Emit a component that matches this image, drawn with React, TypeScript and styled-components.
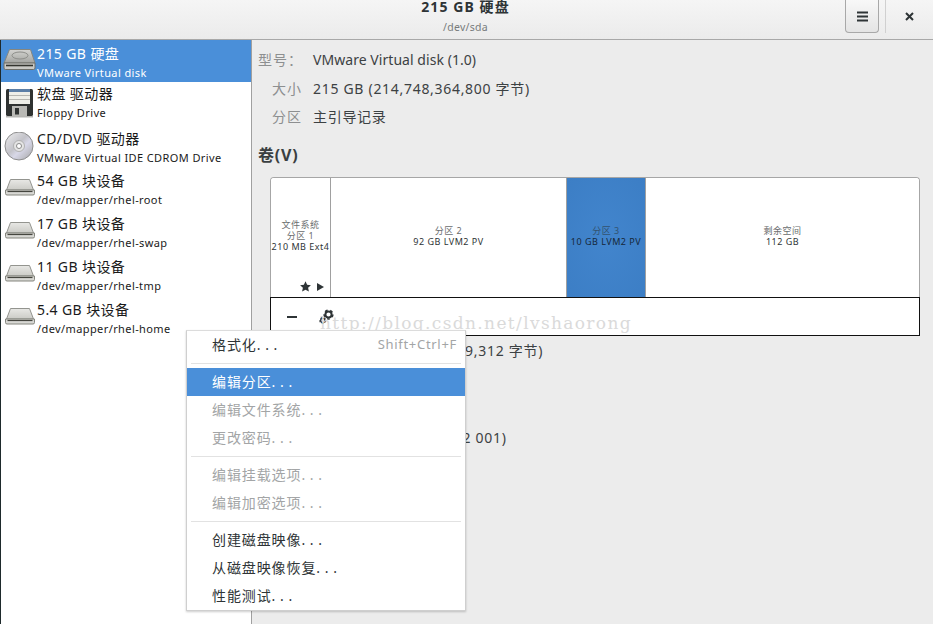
import { styled, createGlobalStyle } from 'styled-components';

const GlobalStyle = createGlobalStyle`
  html, body {
    margin: 0;
    padding: 0;
    background: #ececec;
  }
  * {
    box-sizing: border-box;
  }
`;

const Window = styled.div`
  position: relative;
  width: 933px;
  height: 624px;
  overflow: hidden;
  display: flex;
  flex-direction: column;
  background: #ececec;
  color: #2e3436;
  font-family: 'Noto Sans', 'Noto Sans CJK SC', sans-serif;
  font-size: 13px;
`;

const Header = styled.header`
  height: 40px;
  flex: none;
  display: flex;
  align-items: flex-start;
  justify-content: flex-end;
  border-bottom: 1px solid #a8a8a8;
  background: linear-gradient(#f5f5f5, #ebebeb);
`;

const TitleBlock = styled.div`
  position: absolute;
  left: 0;
  top: -3px;
  width: 931px;
  text-align: center;
`;

const Title = styled.div`
  font-size: 14px;
  font-weight: 700;
  line-height: 20px;
  letter-spacing: 1.1px;
  color: #2e3436;
`;

const Subtitle = styled.div`
  margin-top: 1px;
  font-size: 10.5px;
  line-height: 18px;
  letter-spacing: 0.3px;
  color: #777b7c;
`;

const MenuButton = styled.button`
  width: 34px;
  height: 33px;
  margin-right: 6px;
  padding: 0;
  display: flex;
  align-items: center;
  justify-content: center;
  border: 1px solid #a8a8a8;
  border-top: none;
  border-radius: 0 0 4px 4px;
  background: linear-gradient(#f8f8f8, #e4e4e4);
`;

const HeaderSeparator = styled.div`
  width: 1px;
  height: 33px;
  background: #d0d0d0;
`;

const CloseButton = styled.div`
  width: 47px;
  height: 33px;
  display: flex;
  align-items: center;
  justify-content: center;
`;

const Body = styled.div`
  flex: 1;
  display: flex;
  min-height: 0;
`;

const Sidebar = styled.aside`
  width: 252px;
  flex: none;
  background: #fff;
  border-left: 1px solid #1e2a2c;
  border-right: 1px solid #a0a0a0;
`;

const DriveRow = styled.div<{ $selected?: boolean; $height: number }>`
  height: ${(p) => p.$height}px;
  display: flex;
  align-items: flex-start;
  background: ${(p) => (p.$selected ? '#4a8fd9' : 'transparent')};
  color: ${(p) => (p.$selected ? '#fff' : '#1a1a1a')};
`;

const DriveIcon = styled.div`
  width: 36px;
  height: 41px;
  flex: none;
  display: flex;
  align-items: center;
  justify-content: center;
`;

const DriveText = styled.div<{ $top: number }>`
  padding-top: ${(p) => p.$top}px;
  min-width: 0;
  white-space: nowrap;
`;

const DriveTitle = styled.div`
  font-size: 14px;
  line-height: 20px;
  letter-spacing: 0.4px;
`;

const DriveSub = styled.div`
  font-size: 11px;
  line-height: 18px;
  letter-spacing: 0.4px;
`;

const Content = styled.main`
  flex: 1;
  padding: 5px 14px 0 6px;
`;

const InfoGrid = styled.dl<{ $row: number }>`
  margin: 0;
  display: grid;
  grid-template-columns: 44px 1fr;
  column-gap: 11px;
  grid-auto-rows: ${(p) => p.$row}px;
  align-items: center;
`;

const InfoLabel = styled.dt`
  font-size: 14px;
  color: #8d8f90;
  text-align: right;
  white-space: nowrap;
  letter-spacing: 1px;
`;

const InfoValue = styled.dd<{ $tracking?: number }>`
  margin: 0;
  font-size: 14px;
  color: #3c4143;
  white-space: nowrap;
  letter-spacing: ${(p) => p.$tracking ?? 0.7}px;
`;

const SectionTitle = styled.h2`
  margin: 14.5px 0 12px;
  font-size: 16px;
  line-height: 20px;
  font-weight: 700;
  color: #3a3f41;
  letter-spacing: 0.8px;
`;

const VolumeBox = styled.div`
  margin-left: 12px;
  width: 650px;
`;

const PartitionBar = styled.div`
  height: 120px;
  display: flex;
  border: 1px solid #a6a6a6;
  border-bottom: none;
  border-radius: 4px 4px 0 0;
  overflow: hidden;
  background: #fff;
`;

const Partition = styled.div<{ $width?: number; $selected?: boolean; $last?: boolean }>`
  position: relative;
  width: ${(p) => (p.$width ? `${p.$width}px` : 'auto')};
  flex: ${(p) => (p.$width ? 'none' : '1')};
  display: flex;
  flex-direction: column;
  align-items: center;
  justify-content: center;
  padding-bottom: 4px;
  border-right: ${(p) => (p.$last ? 'none' : '1px solid #a0a0a0')};
  background: ${(p) =>
    p.$selected ? 'radial-gradient(ellipse at center, #4285cd, #3c7ec5)' : '#fff'};
  font-size: 9px;
  line-height: 11px;
  letter-spacing: 0.5px;
  white-space: nowrap;
`;

const PartitionName = styled.div<{ $selected?: boolean }>`
  color: ${(p) => (p.$selected ? '#33526f' : '#6a6d6e')};
`;

const PartitionSize = styled.div<{ $selected?: boolean }>`
  color: ${(p) => (p.$selected ? '#16283a' : '#2e3436')};
`;

const PartitionMarks = styled.div`
  position: absolute;
  right: 6px;
  bottom: 5px;
  display: flex;
  align-items: center;
  gap: 6px;
`;

const VolumeToolbar = styled.div`
  height: 39px;
  display: flex;
  align-items: center;
  gap: 19px;
  padding-left: 13px;
  background: #fff;
  border: 1px solid #111;
`;

const ToolIcon = styled.div`
  width: 16px;
  height: 16px;
  display: flex;
  align-items: center;
  justify-content: center;
`;

const PartitionInfo = styled.div`
  margin-top: -1px;
`;

const Watermark = styled.div`
  position: absolute;
  left: 320px;
  top: 312px;
  font-family: 'DejaVu Serif', 'Liberation Serif', serif;
  font-size: 17px;
  line-height: 22px;
  letter-spacing: 1.36px;
  color: #dadada;
  white-space: nowrap;
  pointer-events: none;
`;

const Popup = styled.div`
  position: absolute;
  left: 186px;
  top: 330px;
  width: 280px;
  height: 281px;
  background: #fff;
  border: 1px solid #cfcfcf;
  border-top-color: #dcdcdc;
  box-shadow: 0 1px 2px rgba(0, 0, 0, 0.2);
`;

const PopupItem = styled.div<{ $active?: boolean; $disabled?: boolean }>`
  height: 28px;
  display: flex;
  align-items: center;
  padding: 0 8px 2px 25px;
  font-size: 14px;
  letter-spacing: 0.9px;
  white-space: nowrap;
  background: ${(p) => (p.$active ? '#4a8fd9' : 'transparent')};
  color: ${(p) => (p.$active ? '#fff' : p.$disabled ? '#a3a5a6' : '#2e3436')};
`;

const Dots = styled.span`
  letter-spacing: 4.7px;
`;

const Shortcut = styled.span`
  margin-left: auto;
  font-size: 13px;
  letter-spacing: 0.7px;
  color: #a3a5a6;
`;

const PopupSeparator = styled.div`
  height: 1px;
  margin: 4px 4px;
  background: #e2e2e2;
`;

const SelectedDisk = () => (
  <svg width="33" height="26" viewBox="0 0 33 26">
    <defs>
      <linearGradient id="diskTop" x1="0" y1="0" x2="0" y2="1">
        <stop offset="0" stopColor="#d4d4d1" />
        <stop offset="1" stopColor="#a3a4a0" />
      </linearGradient>
    </defs>
    <path d="M6.5 1.5h21l4.5 13.5H1z" fill="url(#diskTop)" stroke="#85867f" />
    <ellipse cx="17" cy="7.5" rx="8" ry="3.5" fill="none" stroke="#8d8e8a" />
    <path d="M1 15h31v5a1.5 1.5 0 0 1-1.5 1.5h-28A1.5 1.5 0 0 1 1 20z" fill="#c9c9c5" stroke="#6e6f69" />
    <path d="M3 17.5h27" stroke="#33342e" strokeWidth="1.6" />
  </svg>
);

const PlainDisk = () => (
  <svg width="33" height="26" viewBox="0 0 33 26">
    <defs>
      <linearGradient id="plainTop" x1="0" y1="0" x2="0" y2="1">
        <stop offset="0" stopColor="#e8e8e5" />
        <stop offset="1" stopColor="#cbcbc6" />
      </linearGradient>
    </defs>
    <path d="M7.5 2.5h19l4 10.5h-27z" fill="url(#plainTop)" stroke="#93948f" />
    <path d="M2.5 13h29v3.5a1.5 1.5 0 0 1-1.5 1.5H4a1.5 1.5 0 0 1-1.5-1.5z" fill="#d8d8d4" stroke="#85867f" />
    <path d="M4.5 14.5h25" stroke="#45463f" strokeWidth="1.2" />
  </svg>
);

const FloppyDisk = () => (
  <svg width="29" height="30" viewBox="0 0 29 30">
    <rect x="1" y="1" width="27" height="27" rx="1.5" fill="#2f3231" />
    <rect x="4" y="1" width="21" height="15" fill="#eeeee8" />
    <rect x="4" y="1" width="21" height="3" fill="#5b7ea6" />
    <path d="M4 7.5h21M4 11.5h21" stroke="#b5b5b0" />
    <rect x="7" y="18" width="15" height="10" fill="#b9b9b5" />
    <rect x="10" y="20" width="4" height="6.5" fill="#2f3231" />
    <rect x="1" y="28" width="27" height="1.5" fill="#b5b5b2" />
  </svg>
);

const OpticalDisc = () => (
  <svg width="30" height="30" viewBox="0 0 30 30">
    <defs>
      <linearGradient id="discFace" x1="0" y1="0" x2="1" y2="1">
        <stop offset="0" stopColor="#efefef" />
        <stop offset="0.45" stopColor="#c3c3c9" />
        <stop offset="0.6" stopColor="#d8d8e8" />
        <stop offset="1" stopColor="#a5a5a5" />
      </linearGradient>
    </defs>
    <circle cx="15" cy="14" r="14" fill="url(#discFace)" stroke="#8e8e8e" />
    <circle cx="15" cy="14" r="5.5" fill="#e4e4e4" stroke="#b0b0b0" />
    <circle cx="15" cy="14" r="2.5" fill="#fff" stroke="#8a8a8a" />
  </svg>
);

const MenuLines = () => (
  <svg width="11" height="11" viewBox="0 0 11 11">
    <path d="M0 1.5h11M0 5.5h11M0 9.5h11" stroke="#2e3436" strokeWidth="2" />
  </svg>
);

const CloseMark = () => (
  <svg width="9" height="9" viewBox="0 0 9 9">
    <path d="M1 1l7 7M8 1l-7 7" stroke="#2e3436" strokeWidth="2" />
  </svg>
);

const Star = () => (
  <svg width="11" height="11" viewBox="0 0 11 11">
    <path d="M5.5 0.3l1.6 3.5 3.8.4-2.8 2.6.8 3.8-3.4-1.9-3.4 1.9.8-3.8L0.1 4.2l3.8-.4z" fill="#2e3436" />
  </svg>
);

const PlayMark = () => (
  <svg width="7" height="8" viewBox="0 0 7 8">
    <path d="M0 0l7 4-7 4z" fill="#2e3436" />
  </svg>
);

const MinusMark = () => (
  <svg width="10" height="2" viewBox="0 0 10 2">
    <rect width="10" height="2" fill="#2e3436" />
  </svg>
);

const Gear = ({ x, y, r }: { x: number; y: number; r: number }) => (
  <g transform={`translate(${x} ${y})`}>
    <circle r={r * 0.62} fill="none" stroke="#2e3436" strokeWidth={r * 0.4} />
    <circle
      r={r * 0.88}
      fill="none"
      stroke="#2e3436"
      strokeWidth={r * 0.3}
      strokeDasharray={`${r * 0.55} ${r * 0.55}`}
    />
  </g>
);

const Gears = () => (
  <svg width="16" height="16" viewBox="0 0 16 16">
    <Gear x={9.5} y={5.5} r={5} />
    <Gear x={3.8} y={11.5} r={3.4} />
  </svg>
);

const drives = [
  { title: '215 GB 硬盘', sub: 'VMware Virtual disk', icon: <SelectedDisk />, height: 42, top: 4, selected: true },
  { title: '软盘 驱动器', sub: 'Floppy Drive', icon: <FloppyDisk />, height: 44, top: 2 },
  { title: 'CD/DVD 驱动器', sub: 'VMware Virtual IDE CDROM Drive', icon: <OpticalDisc />, height: 43, top: 3 },
  { title: '54 GB 块设备', sub: '/dev/mapper/rhel-root', icon: <PlainDisk />, height: 43, top: 2 },
  { title: '17 GB 块设备', sub: '/dev/mapper/rhel-swap', icon: <PlainDisk />, height: 43, top: 2 },
  { title: '11 GB 块设备', sub: '/dev/mapper/rhel-tmp', icon: <PlainDisk />, height: 43, top: 2 },
  { title: '5.4 GB 块设备', sub: '/dev/mapper/rhel-home', icon: <PlainDisk />, height: 43, top: 2 },
];

const App = () => (
  <Window>
    <GlobalStyle />
    <Header>
      <TitleBlock>
        <Title>215 GB 硬盘</Title>
        <Subtitle>/dev/sda</Subtitle>
      </TitleBlock>
      <MenuButton>
        <MenuLines />
      </MenuButton>
      <HeaderSeparator />
      <CloseButton>
        <CloseMark />
      </CloseButton>
    </Header>
    <Body>
      <Sidebar>
        {drives.map((drive) => (
          <DriveRow key={drive.title} $selected={drive.selected} $height={drive.height}>
            <DriveIcon>{drive.icon}</DriveIcon>
            <DriveText $top={drive.top}>
              <DriveTitle>{drive.title}</DriveTitle>
              <DriveSub>{drive.sub}</DriveSub>
            </DriveText>
          </DriveRow>
        ))}
      </Sidebar>
      <Content>
        <InfoGrid $row={28.5}>
          <InfoLabel>型号：</InfoLabel>
          <InfoValue $tracking={0.05}>VMware Virtual disk (1.0)</InfoValue>
          <InfoLabel>大小</InfoLabel>
          <InfoValue>215 GB (214,748,364,800 字节)</InfoValue>
          <InfoLabel>分区</InfoLabel>
          <InfoValue>主引导记录</InfoValue>
        </InfoGrid>
        <SectionTitle>卷(V)</SectionTitle>
        <VolumeBox>
          <PartitionBar>
            <Partition $width={60}>
              <PartitionName>文件系统</PartitionName>
              <PartitionName>分区 1</PartitionName>
              <PartitionSize>210 MB Ext4</PartitionSize>
              <PartitionMarks>
                <Star />
                <PlayMark />
              </PartitionMarks>
            </Partition>
            <Partition $width={236}>
              <PartitionName>分区 2</PartitionName>
              <PartitionSize>92 GB LVM2 PV</PartitionSize>
            </Partition>
            <Partition $width={79} $selected>
              <PartitionName $selected>分区 3</PartitionName>
              <PartitionSize $selected>10 GB LVM2 PV</PartitionSize>
            </Partition>
            <Partition $last>
              <PartitionName>剩余空间</PartitionName>
              <PartitionSize>112 GB</PartitionSize>
            </Partition>
          </PartitionBar>
          <VolumeToolbar>
            <ToolIcon>
              <MinusMark />
            </ToolIcon>
            <ToolIcon>
              <Gears />
            </ToolIcon>
          </VolumeToolbar>
        </VolumeBox>
        <PartitionInfo>
          <InfoGrid $row={29}>
            <InfoLabel>大小</InfoLabel>
            <InfoValue>10.737 GB (10,737,419,312 字节)</InfoValue>
            <InfoLabel>设备</InfoLabel>
            <InfoValue>/dev/sda3</InfoValue>
            <InfoLabel>UUID</InfoLabel>
            <InfoValue>—</InfoValue>
            <InfoLabel>内容</InfoLabel>
            <InfoValue>LVM2 物理卷 PV (LVM2 001)</InfoValue>
          </InfoGrid>
        </PartitionInfo>
      </Content>
    </Body>
    <Watermark>http://blog.csdn.net/lvshaorong</Watermark>
    <Popup>
      <PopupItem>
        格式化<Dots>...</Dots>
        <Shortcut>Shift+Ctrl+F</Shortcut>
      </PopupItem>
      <PopupSeparator />
      <PopupItem $active>编辑分区<Dots>...</Dots></PopupItem>
      <PopupItem $disabled>编辑文件系统<Dots>...</Dots></PopupItem>
      <PopupItem $disabled>更改密码<Dots>...</Dots></PopupItem>
      <PopupSeparator />
      <PopupItem $disabled>编辑挂载选项<Dots>...</Dots></PopupItem>
      <PopupItem $disabled>编辑加密选项<Dots>...</Dots></PopupItem>
      <PopupSeparator />
      <PopupItem>创建磁盘映像<Dots>...</Dots></PopupItem>
      <PopupItem>从磁盘映像恢复<Dots>...</Dots></PopupItem>
      <PopupItem>性能测试<Dots>...</Dots></PopupItem>
    </Popup>
  </Window>
);

export default App;
